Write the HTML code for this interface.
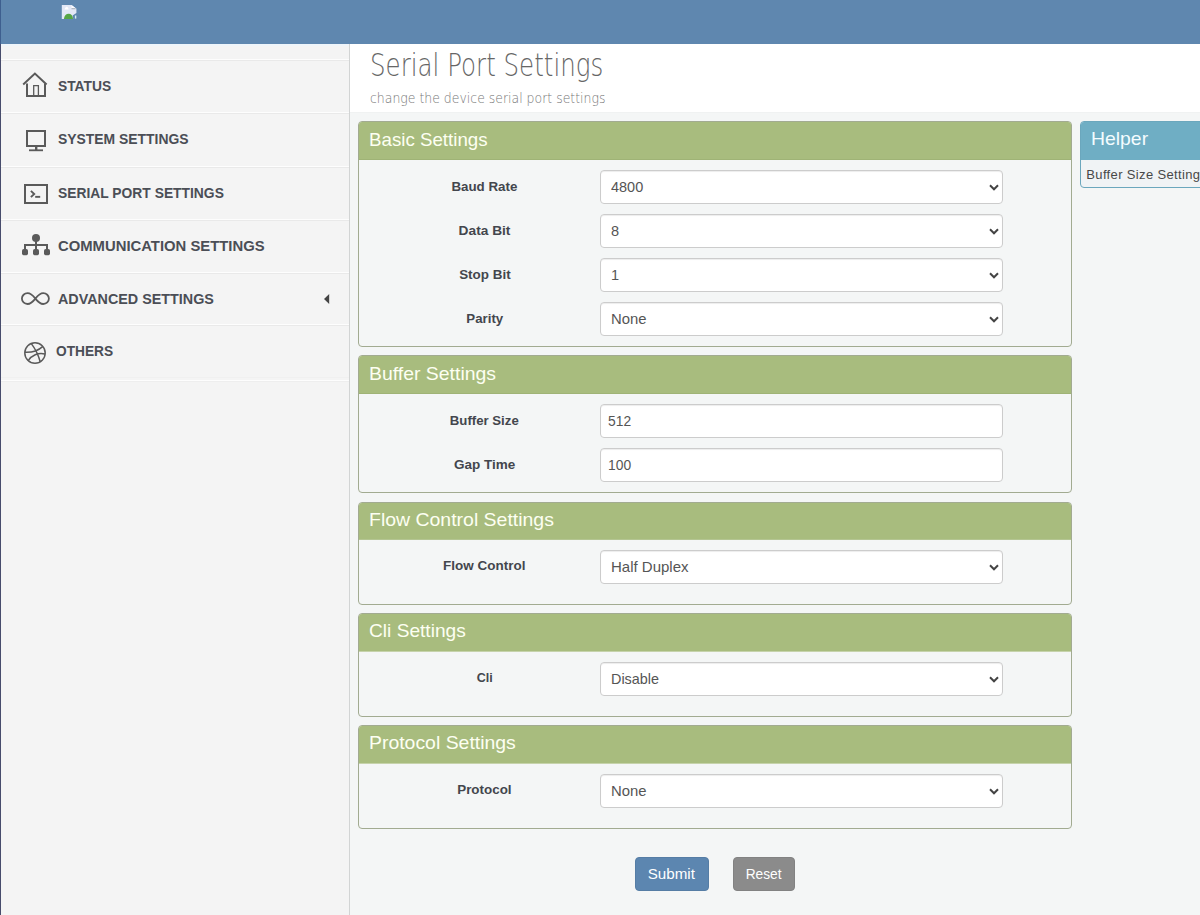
<!DOCTYPE html>
<html lang="en">
<head>
<meta charset="utf-8">
<title>Serial Port Settings</title>
<style>
*{box-sizing:border-box}
html,body{margin:0;padding:0}
body{width:1200px;height:915px;overflow:hidden;position:relative;background:#f4f6f6;font-family:"Liberation Sans",sans-serif;color:#444;font-size:13px}
.sx{display:inline-block;white-space:nowrap}
#edge{position:absolute;left:0;top:0;width:1px;height:915px;background:linear-gradient(#3e5f8f 0,#3e5f8f 44px,#474c6c 44px,#474c6c 100%);z-index:10}
#top{position:absolute;left:0;top:0;width:1200px;height:44px;background:#5f87af}
#side{position:absolute;left:0;top:44px;width:350px;height:871px;background:#f4f4f4;border-right:1px solid #d2d4d4}
.sep{position:absolute;left:0;width:349px;height:2px;border-top:1px solid #fdfdfd;background:#e9e9e9}
.nav{position:absolute;display:block;text-decoration:none;font-weight:bold;font-size:15.5px;color:#4b4e56;white-space:nowrap;line-height:20px;margin:0}
#navbox svg{position:absolute}
#title{position:absolute;left:350px;top:44px;width:850px;height:69px;background:#fff;border-bottom:1px solid #f0f2f2}
#title h1{margin:0;position:absolute;left:20px;top:2px;font-family:"DejaVu Sans","Liberation Sans",sans-serif;font-size:32px;font-weight:200;color:#666;line-height:40px;white-space:nowrap}
#title p{margin:0;position:absolute;left:20px;top:45px;font-family:"DejaVu Sans","Liberation Sans",sans-serif;font-size:14.5px;font-weight:200;color:#777;line-height:18px;white-space:nowrap}
.panel{position:absolute;left:358px;width:714px;border:1px solid #a2ab91;border-radius:4px;background:#f4f6f6;overflow:hidden}
.hd{font-weight:normal;height:39px;color:#fdfff2;font-size:19px;line-height:36px;padding-left:10.6px;white-space:nowrap;margin:-1px -1px 0 -1px}
.panel .hd{background:#a8bc7e;border-bottom:1px solid #9fb376}
.row{position:absolute;left:0;width:712px;height:34px}
.row label{position:absolute;left:9.6px;width:232px;text-align:center;font-weight:bold;font-size:13.5px;color:#43464d;line-height:34px;top:0}
.ctl{position:absolute;left:241px;top:0;width:403px;height:34px;background:#fff;border:1px solid #ccc;border-radius:4px;font-size:15px;color:#555;line-height:32px;padding-left:10px;box-shadow:inset 0 1px 1px rgba(0,0,0,.075)}
.ctl.inp{padding-left:6.8px}
.ctl svg{position:absolute;right:2.3px;top:13px}
.btn{position:absolute;display:block;margin:0;padding:0;font-family:inherit;top:857px;height:34px;border-radius:4px;color:#fff;font-size:15px;line-height:32px;text-align:center}
#helper{position:absolute;left:1080px;top:121px;width:140px;height:67px;border:1px solid #6ba7bd;border-radius:4px;background:#f0f3f5;overflow:hidden}
#helper .hd{background:#6faec4;color:#f4fcff}
#helper .bd{font-size:13px;color:#484848;padding-left:5.3px;padding-top:1px;line-height:27px;white-space:nowrap;letter-spacing:.35px}
</style>
</head>
<body>
<header id="top"><svg style="position:absolute;left:56px;top:0" width="28" height="24" viewBox="56 0 28 24"><path d="M61.8 5 H71.5 L76.4 8.7 V13 L72.6 15.4 L73.2 18.9 H61.8 Z" fill="#e3e8f6"/><path d="M71.5 5 L76.4 8.7 H71.5 Z" fill="#fbfcff"/><path d="M71.5 8.7 H75.6" stroke="#7f8a99" stroke-width=".7" fill="none"/><path d="M63.9 18.9 C64.2 15.6 66.3 13.7 68.6 13.7 C71 13.7 72.8 15.6 73.1 18.9 Z" fill="#57a646"/><path d="M64.6 9.5 C65 7.6 66 6.7 66.7 6.7 C67.5 6.7 68.3 7.8 68.7 9.5 Z" fill="#fff"/><rect x="74.9" y="15.5" width="1.4" height="3.1" fill="#d6edf3"/></svg></header>
<div id="side"></div>
<nav id="navbox">
<div class="sep" style="top:59px"></div>
<div class="sep" style="top:112px"></div>
<div class="sep" style="top:166px"></div>
<div class="sep" style="top:219px"></div>
<div class="sep" style="top:272px"></div>
<div class="sep" style="top:324px"></div>
<div style="position:absolute;left:0;top:377px;width:349px;height:1px;background:#f0f0f0"></div><div class="sep" style="top:380px;background:#eee"></div><div style="position:absolute;left:0;top:44px;width:349px;height:2px;background:#eff5fa"></div>
<svg style="left:21px;top:71px" width="28" height="28" viewBox="21 71 28 28"><path d="M23.2 84.6 L34.9 73.6 L46.6 84.6" fill="none" stroke="#5a5a5a" stroke-width="2" stroke-linejoin="miter"/><path d="M27 83.5 V96 H45 V83.5" fill="none" stroke="#5a5a5a" stroke-width="2"/><path d="M33.7 96 V85.7 H38.4 V96" fill="none" stroke="#5a5a5a" stroke-width="1.3"/></svg>
<a class="nav" style="left:58.4px;top:75.5px"><span class="sx" style="transform:translateY(-0.5px) scaleX(0.891);transform-origin:left center">STATUS</span></a>
<svg style="left:24px;top:128px" width="24" height="26" viewBox="24 128 24 26"><rect x="27" y="131" width="18" height="15" fill="none" stroke="#5a5a5a" stroke-width="2"/><rect x="35" y="147" width="2.4" height="3" fill="#5a5a5a"/><rect x="29" y="149.4" width="14" height="1.8" fill="#5a5a5a"/></svg>
<a class="nav" style="left:58.4px;top:128.7px"><span class="sx" style="transform:translateY(-0.5px) scaleX(0.897);transform-origin:left center">SYSTEM SETTINGS</span></a>
<svg style="left:22px;top:182px" width="28" height="24" viewBox="22 182 28 24"><rect x="25" y="185" width="22" height="18" fill="none" stroke="#5a5a5a" stroke-width="2"/><path d="M30.9 190.9 L34.2 194 L30.9 197.1" fill="none" stroke="#5a5a5a" stroke-width="1.9"/><rect x="35.2" y="195.9" width="5" height="1.9" fill="#5a5a5a"/></svg>
<a class="nav" style="left:58.4px;top:182.5px"><span class="sx" style="transform:translateY(-0.5px) scaleX(0.893);transform-origin:left center">SERIAL PORT SETTINGS</span></a>
<svg style="left:20px;top:232px" width="32" height="26" viewBox="20 232 32 26"><circle cx="36" cy="238" r="4" fill="#5a5a5a"/><path d="M25 250 V245 H47 V250 M36 241 V250" fill="none" stroke="#5a5a5a" stroke-width="2"/><rect x="22" y="249" width="6" height="6.2" rx="1.8" fill="#5a5a5a"/><rect x="33" y="249" width="6" height="6.2" rx="1.8" fill="#5a5a5a"/><rect x="44" y="249" width="6" height="6.2" rx="1.8" fill="#5a5a5a"/></svg>
<a class="nav" style="left:58.4px;top:235.7px"><span class="sx" style="transform:translateY(-0.5px) scaleX(0.957);transform-origin:left center">COMMUNICATION SETTINGS</span></a>
<svg style="left:19px;top:290px" width="33" height="18" viewBox="19 290 33 18"><path d="M35.4 298.6 C32.5 295 30.5 293.2 27.6 293.2 C24.4 293.2 21.9 295.6 21.9 298.6 C21.9 301.6 24.4 304 27.6 304 C30.5 304 32.5 302.2 35.4 298.6 C38.3 295 40.3 293.2 43.2 293.2 C46.4 293.2 48.9 295.6 48.9 298.6 C48.9 301.6 46.4 304 43.2 304 C40.3 304 38.3 302.2 35.4 298.6 Z" fill="none" stroke="#5a5a5a" stroke-width="1.8"/></svg>
<a class="nav" style="left:58.4px;top:288.7px"><span class="sx" style="transform:translateY(-0.5px) scaleX(0.925);transform-origin:left center">ADVANCED SETTINGS</span></a>
<svg style="left:22px;top:340px" width="26" height="26" viewBox="22 340 26 26"><g fill="none" stroke="#5a5a5a" stroke-width="1.5"><circle cx="35" cy="353" r="10.2"/><path d="M31.3 343.6 C35.5 349 38.5 355.5 40.2 361.8"/><path d="M25 352.3 C31 352.6 37.5 351.2 42.6 346.6"/><path d="M28.2 360.6 C31.5 355.5 38 352.2 45 354"/></g></svg>
<a class="nav" style="left:56.4px;top:340.7px"><span class="sx" style="transform:translateY(-0.5px) scaleX(0.885);transform-origin:left center">OTHERS</span></a>
<svg style="position:absolute;left:322px;top:292px" width="9" height="14" viewBox="322 292 9 14"><path d="M329.2 294 V304 L324 299 Z" fill="#444"/></svg>
</nav>
<div id="title"><h1><span class="sx" style="transform:translateY(-0.7px) scaleX(0.766);transform-origin:left center">Serial Port Settings</span></h1><p><span class="sx" style="transform:scaleX(0.86);transform-origin:left center">change the device serial port settings</span></p></div>
<section class="panel" style="top:121px;height:226px"><h3 class="hd"><span class="sx" style="transform:translateY(0.5px) scaleX(0.985);transform-origin:left center">Basic Settings</span></h3>
<div class="row" style="top:48px"><label><span class="sx" style="transform:scaleX(0.988);transform-origin:center center">Baud Rate</span></label><div class="ctl"><span class="sx" style="transform:scaleX(0.965);transform-origin:left center">4800</span><svg width="12" height="8" viewBox="0 0 12 8"><path d="M2 1.3 L6 5.3 L10 1.3" fill="none" stroke="#444" stroke-width="2"/></svg></div></div>
<div class="row" style="top:92px"><label><span class="sx" style="transform:scaleX(1.016);transform-origin:center center">Data Bit</span></label><div class="ctl"><span class="sx" style="transform:scaleX(0.97);transform-origin:left center">8</span><svg width="12" height="8" viewBox="0 0 12 8"><path d="M2 1.3 L6 5.3 L10 1.3" fill="none" stroke="#444" stroke-width="2"/></svg></div></div>
<div class="row" style="top:136px"><label><span class="sx" style="transform:scaleX(0.995);transform-origin:center center">Stop Bit</span></label><div class="ctl"><span class="sx" style="transform:scaleX(0.97);transform-origin:left center">1</span><svg width="12" height="8" viewBox="0 0 12 8"><path d="M2 1.3 L6 5.3 L10 1.3" fill="none" stroke="#444" stroke-width="2"/></svg></div></div>
<div class="row" style="top:180px"><label><span class="sx" style="transform:scaleX(0.981);transform-origin:center center">Parity</span></label><div class="ctl"><span class="sx" style="transform:scaleX(0.99);transform-origin:left center">None</span><svg width="12" height="8" viewBox="0 0 12 8"><path d="M2 1.3 L6 5.3 L10 1.3" fill="none" stroke="#444" stroke-width="2"/></svg></div></div>
</section>
<section class="panel" style="top:355px;height:138px"><h3 class="hd"><span class="sx" style="transform:translateY(0.7px) scaleX(1.022);transform-origin:left center">Buffer Settings</span></h3>
<div class="row" style="top:48px"><label><span class="sx" style="transform:scaleX(0.978);transform-origin:center center">Buffer Size</span></label><div class="ctl inp"><span class="sx" style="transform:scaleX(0.923);transform-origin:left center">512</span></div></div>
<div class="row" style="top:92px"><label><span class="sx" style="transform:scaleX(1.0);transform-origin:center center">Gap Time</span></label><div class="ctl inp"><span class="sx" style="transform:scaleX(0.923);transform-origin:left center">100</span></div></div>
</section>
<section class="panel" style="top:502px;height:103px"><h3 class="hd" style="height:38px;border-bottom-color:#b4c592"><span class="sx" style="transform:scaleX(1.024);transform-origin:left center">Flow Control Settings</span></h3>
<div class="row" style="top:47px"><label style="top:-1px"><span class="sx" style="transform:scaleX(0.998);transform-origin:center center">Flow Control</span></label><div class="ctl"><span class="sx" style="transform:scaleX(1.0);transform-origin:left center">Half Duplex</span><svg width="12" height="8" viewBox="0 0 12 8"><path d="M2 1.3 L6 5.3 L10 1.3" fill="none" stroke="#444" stroke-width="2"/></svg></div></div>
</section>
<section class="panel" style="top:613px;height:104px"><h3 class="hd" style="height:39px;border-bottom-color:#c6d3ab"><span class="sx" style="transform:scaleX(1.007);transform-origin:left center">Cli Settings</span></h3>
<div class="row" style="top:48px"><label style="top:-1px"><span class="sx" style="transform:scaleX(0.927);transform-origin:center center">Cli</span></label><div class="ctl"><span class="sx" style="transform:scaleX(0.959);transform-origin:left center">Disable</span><svg width="12" height="8" viewBox="0 0 12 8"><path d="M2 1.3 L6 5.3 L10 1.3" fill="none" stroke="#444" stroke-width="2"/></svg></div></div>
</section>
<section class="panel" style="top:725px;height:104px"><h3 class="hd" style="height:39px;border-bottom-color:#c6d3ab"><span class="sx" style="transform:scaleX(1.022);transform-origin:left center">Protocol Settings</span></h3>
<div class="row" style="top:48px"><label style="top:-1px"><span class="sx" style="transform:scaleX(0.992);transform-origin:center center">Protocol</span></label><div class="ctl"><span class="sx" style="transform:scaleX(0.99);transform-origin:left center">None</span><svg width="12" height="8" viewBox="0 0 12 8"><path d="M2 1.3 L6 5.3 L10 1.3" fill="none" stroke="#444" stroke-width="2"/></svg></div></div>
</section>
<button type="button" class="btn" style="left:635px;width:74px;background:#5c86b0;border:1px solid #557da5"><span style="position:relative;left:-.7px"><span class="sx" style="transform:scaleX(1.012);transform-origin:center center">Submit</span></span></button>
<button type="button" class="btn" style="left:733px;width:62px;background:#8b8b8b;border:1px solid #828282"><span class="sx" style="transform:scaleX(0.915);transform-origin:center center">Reset</span></button>
<aside id="helper"><h3 class="hd"><span class="sx" style="transform:scaleX(1.02);transform-origin:left center">Helper</span></h3><div class="bd">Buffer Size Setting</div></aside>
<div id="edge"></div>
</body>
</html>
